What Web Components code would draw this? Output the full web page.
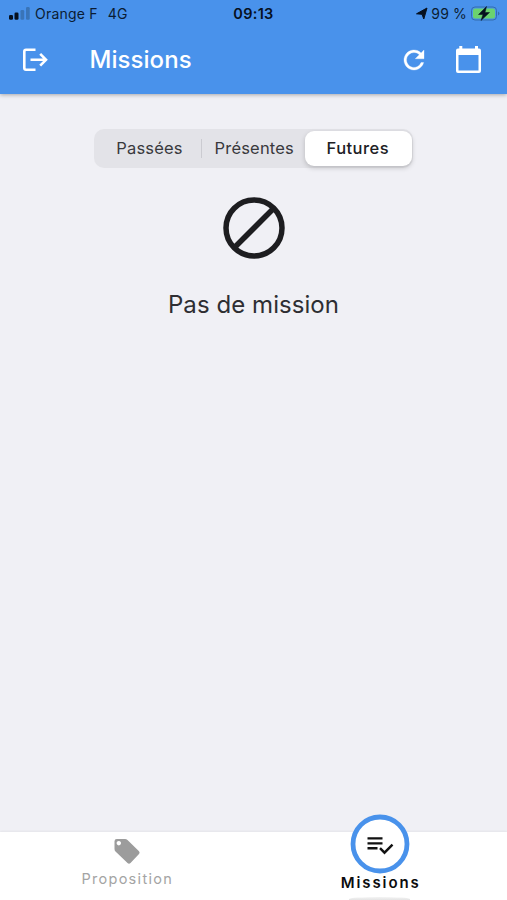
<!DOCTYPE html>
<html lang="fr"><head><meta charset="utf-8"><title>Missions</title>
<style>html,body{margin:0;height:100%;overflow:hidden}body{font-family:Inter,"Liberation Sans",sans-serif;background:#f0f0f5}</style></head>
<body><mission-app></mission-app>
<script>
const define=(name,html)=>{
  const t=document.createElement('template');t.innerHTML=html;
  customElements.define(name,class extends HTMLElement{
    constructor(){super();this.attachShadow({mode:'open'}).append(t.content.cloneNode(true));}
  });
};
define('status-bar',`<style>
:host{display:grid;grid-template-columns:1fr auto 1fr;align-items:center;height:28px;color:#0b1c33;font-size:14px;line-height:28px;white-space:pre}
.l{display:flex;padding-left:8px;letter-spacing:.22px}.l svg{margin-right:5px}.net{margin-left:10px}
.c{font-weight:600;color:#06101f;font-size:14.500px;letter-spacing:.3px}
.r{display:flex;justify-content:flex-end;padding-right:6px;letter-spacing:.15px}
svg{display:block}
</style>
<div class="l"><svg width="22" height="28"><g fill="#06101f"><rect x="1" y="15" width="4" height="4.700" rx="1.300"/><rect x="6.500" y="12.500" width="4" height="7.200" rx="1.300"/></g><g fill="#3974b8"><rect x="12.500" y="10" width="3.700" height="9.700" rx="1.300"/><rect x="18" y="7" width="3.700" height="12.700" rx="1.300"/></g></svg><span>Orange F</span><span class="net">4G</span></div>
<div class="c">09:13</div>
<div class="r"><svg width="17" height="28"><path d="M2.500 13.800 13 8 9.800 19 8 14.300Z" fill="#06101f" stroke="#06101f" stroke-linejoin="round" stroke-width="1"/></svg><span>99 %</span><svg width="34" height="28"><rect x="4.500" y="7" width="25" height="13" rx="3.500" fill="none" stroke="#356dad"/><rect x="6" y="8.500" width="22" height="10" rx="2" fill="#6bd26f"/><path d="M31 11.500Q34 13.500 31 15.500Z" fill="#356dad"/><path d="M19.500 6.500 11.500 14.500H16L14 20.500 22.500 12.500H18Z" fill="#06101f" stroke="#06101f" stroke-width=".5"/></svg></div>`);
define('app-toolbar',`<style>
:host{display:flex;align-items:center;height:66px;padding:0 24.500px 0 19.500px;color:#fff}
svg{display:block}.t{margin-left:40px;font-size:24px;font-weight:500;line-height:64px;letter-spacing:.05px;flex:1;padding-bottom:2px}
.re{margin-right:23.500px}
</style>
<svg width="30" height="66" fill="none" stroke="#fff" stroke-width="2.600"><path d="M15.500 21.800H6Q4.300 21.800 4.300 23.500V40Q4.300 41.700 6 41.700H15.500M10.500 31.800H26M20.200 25.900 26 31.800 20.200 37.700"/></svg>
<span class="t">Missions</span>
<svg class="re" width="30" height="66" viewBox="0 -13.600 24 52.800"><path fill="#fff" stroke="#fff" stroke-width=".25" d="M17.650 6.350A8 8 0 1 0 19.730 14h-2.080A6 6 0 1 1 12 6c1.660 0 3.140.69 4.220 1.780L13 11h7V4z"/></svg>
<svg width="30" height="66"><path fill="#fff" fill-rule="evenodd" d="M6.300 18h3v2.500H22V18h3v2.500h1Q28 20.500 28 22.500V43Q28 45 26 45H5Q3 45 3 43V22.500Q3 20.500 5 20.500h1.300ZM5.500 27V42.600H25.500V27Z"/></svg>`);
define('app-header',`<style>:host{display:block;background:#4992eb;box-shadow:0 1px 4px #0000004d;position:relative}</style><status-bar></status-bar><app-toolbar></app-toolbar>`);
define('segment-button',`<style>
:host{display:flex;align-items:center;justify-content:center;box-sizing:border-box;border-radius:9px;font-size:16.500px;color:#39393d;letter-spacing:.18px;height:35px;padding-bottom:1px}
:host([active]){background:#fff;color:#202024;font-weight:500;letter-spacing:.45px;padding-right:1px;box-shadow:0 2px 5px #00000030}
</style><slot></slot>`);
define('segment-control',`<style>
:host{display:grid;grid-template-columns:108px 101.500px 106.500px;width:319px;height:39px;box-sizing:border-box;padding:2px 1.500px;border-radius:10px;background:#e3e3e8;margin:35px auto 0;position:relative}
:host::before{content:"";position:absolute;left:107px;top:10px;width:1px;height:19px;background:#cbcbd1}
</style><slot></slot>`);
define('empty-state',`<style>:host{display:flex;flex-direction:column;align-items:center;padding-top:29px;font-size:24px;color:#2e2e32;letter-spacing:.06px;line-height:34px}svg{display:block;margin-bottom:28px}</style>
<svg width="64" height="63" fill="none" stroke="#1d1d20" stroke-width="5.500"><circle cx="32" cy="31" r="28"/><path d="M12.500 50.500 51.500 11.500"/></svg><slot></slot>`);
define('tab-item',`<style>
:host{display:flex;flex-direction:column;align-items:center;color:#a4a4a4;font-size:14.500px;letter-spacing:1.300px;line-height:20px;padding-top:7px}
:host([active]){color:#0c0c0e;font-size:15px;font-weight:600;letter-spacing:1.900px;padding:0;margin-top:-17px}
span{padding-left:1px}
</style><slot name="icon"></slot><span><slot></slot></span>`);
define('tab-bar',`<style>
:host{display:grid;grid-template-columns:1fr 1fr;background:#fff;height:68px;box-shadow:0 -1px 2px #0000000d;position:relative}
svg{display:block}
i{position:absolute;left:349px;width:61px;top:65px;height:3px;background:linear-gradient(#f3f3f3,#e4e4e4);border-radius:50% 50% 0 0 / 2px 2px 0 0}
</style>
<tab-item><svg slot="icon" width="28" height="30"><path fill="#9c9c9c" fill-rule="evenodd" d="M3.800 0H12Q13.500 0 14.500 1L26 12.200Q27.300 13.600 26 15L17.500 24Q16 25.300 14.500 24L2.500 12.500Q1.500 11.500 1.500 10V2.300Q1.500 0 3.800 0ZM5.800 2A2.200 2.200 0 1 0 5.810 2Z"/></svg>Proposition</tab-item>
<tab-item active><svg slot="icon" width="60" height="58" overflow="visible"><circle cx="30" cy="29" r="27" fill="#fff" stroke="#4992eb" stroke-width="4.800"/><path d="M17.500 23.400H32.500M17.500 28.400H32.500M17.500 33.300H27.500M30 33.200 34.500 37.700 42.500 29.700" fill="none" stroke="#111" stroke-width="2.400"/></svg>Missions</tab-item><i></i>`);
define('mission-app',`<style>:host{display:flex;flex-direction:column;height:900px;width:507px;background:#f0f0f5}main{flex:1}</style>
<app-header></app-header><main><segment-control><segment-button>Passées</segment-button><segment-button>Présentes</segment-button><segment-button active>Futures</segment-button></segment-control><empty-state>Pas de mission</empty-state></main><tab-bar></tab-bar>`);
</script></body></html>
